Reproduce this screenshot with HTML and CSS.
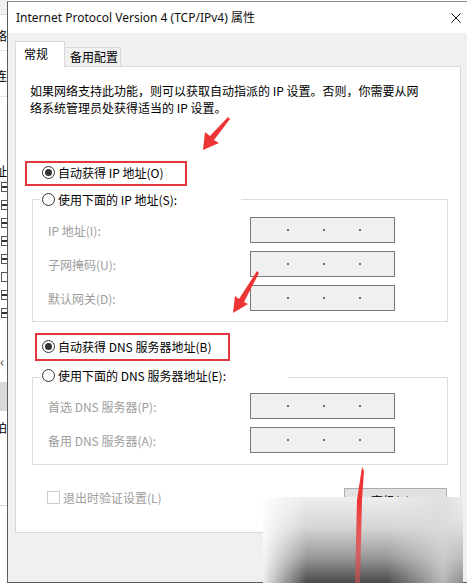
FILE: index.html
```html
<!DOCTYPE html>
<html lang="zh-CN">
<head>
    <meta charset="UTF-8">
    <meta name="viewport" content="width=device-width, initial-scale=1.0">
    <title>Internet Protocol Version 4 (TCP/IPv4) 属性</title>
    <link rel="stylesheet" href="styles.css">
</head>
<body>

<div class="desk">

    <!-- 后面的网络连接窗口，只露出左边一条 -->
    <div class="behind">
        <div class="bh-top"></div>
        <div class="bh-row bh-r1"><span>网络</span></div>
        <div class="bh-row bh-r2"><span>连</span></div>
        <div class="bh-gap"></div>
        <div class="bh-row bh-r3"><span>地址</span></div>
        <div class="bh-checks">
            <i></i><i></i><i></i><i></i><i></i><i class="off"></i><i></i><i></i>
        </div>
        <div class="bh-arrow">‹</div>
        <div class="bh-bar"></div>
        <div class="bh-row bh-r4"><span>拍</span></div>
        <div class="bh-line"></div>
    </div>

    <!-- 属性对话框 -->
    <div class="dialog">
        <div class="titlebar">
            <span class="title">Internet Protocol Version 4 (TCP/IPv4) 属性</span>
            <span class="close">
                <svg width="10" height="10" viewBox="0 0 10 10">
                    <path d="M0.5 0.5 L9.5 9.5 M9.5 0.5 L0.5 9.5" stroke="#111" stroke-width="1" fill="none"/>
                </svg>
            </span>
        </div>

        <div class="content">
            <div class="tabs">
                <div class="tab active">常规</div>
                <div class="tab">备用配置</div>
            </div>

            <div class="panel">
                <p class="intro">如果网络支持此功能，则可以获取自动指派的 IP 设置。否则，你需要从网<br>络系统管理员处获得适当的 IP 设置。</p>

                <div class="radio-row hl hl-ip">
                    <span class="radio on"></span>
                    <span>自动获得 IP 地址(O)</span>
                </div>

                <div class="group group-ip">
                    <div class="radio-row legend legend-ip">
                        <span class="radio"></span>
                        <span>使用下面的 IP 地址(S):</span>
                    </div>
                    <div class="field-row first">
                        <span class="label">IP 地址(I):</span>
                        <span class="field"><i></i><i></i><i></i></span>
                    </div>
                    <div class="field-row">
                        <span class="label">子网掩码(U):</span>
                        <span class="field"><i></i><i></i><i></i></span>
                    </div>
                    <div class="field-row">
                        <span class="label">默认网关(D):</span>
                        <span class="field"><i></i><i></i><i></i></span>
                    </div>
                </div>

                <div class="radio-row hl hl-dns">
                    <span class="radio on"></span>
                    <span>自动获得 DNS 服务器地址(B)</span>
                </div>

                <div class="group group-dns">
                    <div class="radio-row legend legend-dns">
                        <span class="radio"></span>
                        <span>使用下面的 DNS 服务器地址(E):</span>
                    </div>
                    <div class="field-row first">
                        <span class="label">首选 DNS 服务器(P):</span>
                        <span class="field"><i></i><i></i><i></i></span>
                    </div>
                    <div class="field-row">
                        <span class="label">备用 DNS 服务器(A):</span>
                        <span class="field"><i></i><i></i><i></i></span>
                    </div>
                </div>

                <div class="footer-row">
                    <label class="check-label">
                        <span class="checkbox"></span>
                        <span>退出时验证设置(L)</span>
                    </label>
                    <button class="btn">高级(V)...</button>
                </div>
            </div>
        </div>
    </div>
</div>

<!-- 截图上的水印涂抹 -->
<div class="smear"></div>

<!-- 红色标注箭头 -->
<svg class="marks" width="467" height="583" viewBox="0 0 467 583">
    <defs>
        <linearGradient id="fade" x1="0" y1="0" x2="0" y2="1">
            <stop offset="0" stop-color="#ee3535"/>
            <stop offset="0.3" stop-color="#ee3535"/>
            <stop offset="1" stop-color="#e05050" stop-opacity="0.55"/>
        </linearGradient>
    </defs>
    <polygon points="203,150 205,132 210,136 228,117 230,119 214,140 219,143" fill="#ee3535"/>
    <polygon points="233,313 235,296 239,299 257,271 259,273 244,302 248,304" fill="#ee3535"/>
    <polygon points="362,467 364,471 362,500 360,583 355,583 357,500" fill="url(#fade)"/>
</svg>

</body>
</html>
```

FILE: styles.css
```css
* {
    box-sizing: border-box;
}
html, body {
    margin: 0;
}
body {
    position: relative;
    width: 467px;
    height: 583px;
    overflow: hidden;
    background: #fff;
    color: #000;
    font-family: "Noto Sans CJK SC", "Noto Sans", sans-serif;
    font-size: 12px;
}
.desk {
    display: flex;
    height: 583px;
}

/* 背后的窗口 */
.behind {
    width: 7px;
    flex: none;
    display: flex;
    flex-direction: column;
    overflow: hidden;
    background: #fff;
}
.bh-top {
    height: 15px;
    flex: none;
    background: #f0f0f0;
    border-bottom: 1px solid #d8d8d8;
}
.bh-row {
    display: flex;
    justify-content: flex-end;
    flex: none;
    line-height: 17px;
    white-space: nowrap;
}
.bh-r1 {
    margin-top: 12px;
    padding-bottom: 6px;
    border-bottom: 1px solid #e3e3e3;
}
.bh-r2 {
    margin-top: 16px;
    padding-bottom: 12px;
    border-bottom: 1px solid #e3e3e3;
}
.bh-gap {
    height: 57px;
    flex: none;
}
.bh-r3 {
    margin-top: 8px;
    padding-bottom: 2px;
    border-bottom: 1px solid #e3e3e3;
}
.bh-checks {
    display: flex;
    flex-direction: column;
    gap: 8px;
    padding-left: 1px;
    flex: none;
}
.bh-checks i {
    width: 8px;
    height: 10px;
    border: 1px solid #555;
    border-right: none;
    background: linear-gradient(#fff 35%, #333 35%, #333 65%, #fff 65%);
}
.bh-checks i.off {
    background: #fff;
}
.bh-arrow {
    flex: none;
    margin-top: 36px;
    line-height: 14px;
    font-size: 14px;
    color: #444;
}
.bh-bar {
    height: 29px;
    flex: none;
    margin-top: 14px;
    background: #d9d9d9;
}
.bh-r4 {
    margin-top: 8px;
}
.bh-line {
    height: 1px;
    flex: none;
    margin-top: 69px;
    background: #d8d8d8;
}

/* 对话框 */
.dialog {
    width: 472px;
    height: 582px;
    flex: none;
    margin-top: 1px;
    display: flex;
    flex-direction: column;
    background: #f0f0f0;
    border: 1px solid #5c5c5c;
    border-top-color: #8a8a8a;
}
.titlebar {
    height: 31px;
    flex: none;
    display: flex;
    align-items: center;
    justify-content: space-between;
    padding-left: 8px;
    background: #fff;
}
.title {
    font-family: "Noto Sans", "Noto Sans CJK SC", sans-serif;
    font-size: 12px;
    line-height: 17px;
    color: #111;
}
.close {
    width: 44px;
    height: 31px;
    display: flex;
    align-items: center;
    justify-content: center;
}
.content {
    flex: 1;
    padding: 8px 0 0 7px;
}

/* 选项卡 */
.tabs {
    display: flex;
    align-items: flex-end;
    height: 25px;
}
.tab {
    border: 1px solid #d9d9d9;
    border-bottom: none;
    white-space: nowrap;
}
.tab.active {
    position: relative;
    z-index: 1;
    width: 50px;
    height: 26px;
    margin-bottom: -1px;
    padding: 3px 0 0 8px;
    line-height: 17px;
    background: #fff;
}
.tab:not(.active) {
    width: 56px;
    height: 19px;
    padding: 1px 0 0 5px;
    border-left: none;
    line-height: 15px;
    background: #f0f0f0;
}
.panel {
    width: 446px;
    height: 467px;
    border: 1px solid #d9d9d9;
    background: #fff;
}
.intro {
    margin: 15px 0 0 14px;
    line-height: 17px;
    white-space: nowrap;
}

/* 单选框 */
.radio-row {
    display: flex;
    align-items: center;
    gap: 3px;
    line-height: 17px;
    white-space: nowrap;
}
.radio {
    width: 13px;
    height: 13px;
    flex: none;
    display: flex;
    align-items: center;
    justify-content: center;
    border: 1px solid #333;
    border-radius: 50%;
    background: #fff;
}
.radio.on::after {
    content: "";
    width: 7px;
    height: 7px;
    border-radius: 50%;
    background: #333;
}

/* 红框标注 */
.hl {
    border: 2px solid #e2383d;
}
.hl-ip {
    width: 162px;
    margin: 45px 0 0 9px;
    padding: 1px 0 3px 15px;
}
.hl-dns {
    width: 195px;
    margin: 11px 0 0 19px;
    padding: 3px 0 4px 5px;
}

/* 分组框 */
.group {
    width: 416px;
    margin-left: 16px;
    border: 1px solid #dcdcdc;
}
.group-ip {
    margin-top: 13px;
    padding-bottom: 10px;
}
.group-dns {
    margin-top: 16px;
    padding-bottom: 11px;
}
.legend {
    margin-left: 7px;
    padding-left: 2px;
    background: #fff;
}
.legend-ip {
    width: 201px;
    margin-top: -9px;
}
.legend-dns {
    width: 248px;
    margin-top: -11px;
}
.field-row {
    display: flex;
    align-items: center;
    margin-top: 8px;
    padding-left: 15px;
}
.field-row.first {
    margin-top: 9px;
}
.label {
    width: 202px;
    color: #9d9d9d;
    white-space: nowrap;
}
.field {
    width: 145px;
    height: 26px;
    display: flex;
    align-items: center;
    justify-content: center;
    gap: 34px;
    padding-left: 3px;
    border: 1px solid #7a7a7a;
    background: #f0f0f0;
}
.field i {
    width: 2px;
    height: 2px;
    background: #6d6d6d;
}

/* 底部 */
.footer-row {
    width: 400px;
    display: flex;
    align-items: flex-start;
    justify-content: space-between;
    margin: 23px 0 0 31px;
}
.check-label {
    display: flex;
    align-items: center;
    gap: 3px;
    padding-top: 1px;
    line-height: 17px;
    color: #9d9d9d;
}
.checkbox {
    width: 13px;
    height: 13px;
    border: 1px solid #cccccc;
    background: #fff;
}
.btn {
    width: 103px;
    height: 25px;
    padding: 0;
    border: 1px solid #adadad;
    background: #e1e1e1;
    font-family: "Noto Sans CJK SC", sans-serif;
    font-size: 12px;
    color: #000;
}

/* 水印涂抹 */
.smear {
    position: absolute;
    left: 263px;
    top: 497px;
    width: 200px;
    height: 86px;
    background:
        linear-gradient(to right, rgba(255,255,255,0.9), rgba(255,255,255,0) 22%, rgba(255,255,255,0) 62%, rgba(220,220,220,0.75) 90%, rgba(235,235,235,0.4)),
        linear-gradient(to bottom, #eeeeee, #d6d6d6 35%, #9a9a9a 70%, #4a4a4a);
}
.marks {
    position: absolute;
    left: 0;
    top: 0;
    pointer-events: none;
}
```
